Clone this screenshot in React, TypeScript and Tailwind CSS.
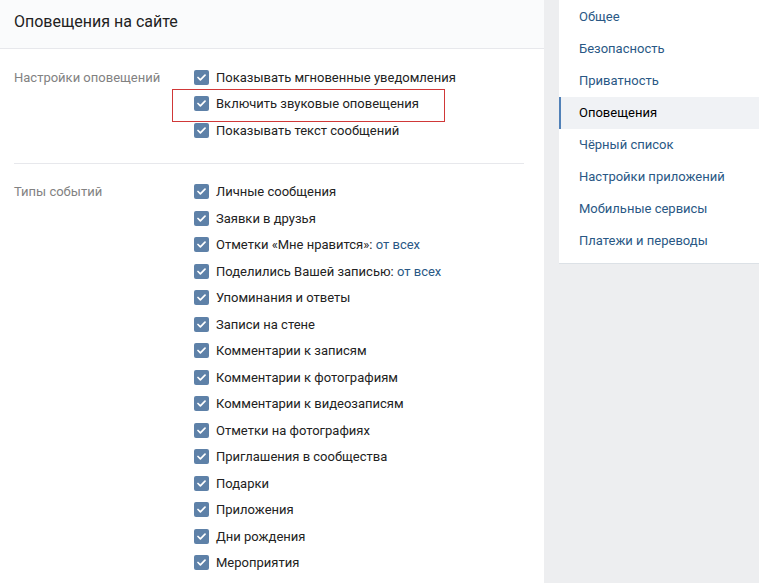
import React from 'react';

type Item = { label: string; link?: string; highlight?: boolean };

// первый блок настроек
const siteSettings: Item[] = [
  { label: 'Показывать мгновенные уведомления' },
  { label: 'Включить звуковые оповещения', highlight: true },
  { label: 'Показывать текст сообщений' },
];

// типы событий
const eventTypes: Item[] = [
  { label: 'Личные сообщения' },
  { label: 'Заявки в друзья' },
  { label: 'Отметки «Мне нравится»:', link: 'от всех' },
  { label: 'Поделились Вашей записью:', link: 'от всех' },
  { label: 'Упоминания и ответы' },
  { label: 'Записи на стене' },
  { label: 'Комментарии к записям' },
  { label: 'Комментарии к фотографиям' },
  { label: 'Комментарии к видеозаписям' },
  { label: 'Отметки на фотографиях' },
  { label: 'Приглашения в сообщества' },
  { label: 'Подарки' },
  { label: 'Приложения' },
  { label: 'Дни рождения' },
  { label: 'Мероприятия' },
];

const menu = [
  'Общее',
  'Безопасность',
  'Приватность',
  'Оповещения',
  'Чёрный список',
  'Настройки приложений',
  'Мобильные сервисы',
  'Платежи и переводы',
];

const Checkbox: React.FC = () => (
  <span className="flex h-[15px] w-[15px] shrink-0 items-center justify-center rounded-[2px] bg-[#5e81a8]">
    <svg width="9" height="7" viewBox="0 0 9 7" fill="none">
      <path d="M1 3.5L3.4 5.8L8 1.2" stroke="#fff" strokeWidth="1.7" strokeLinecap="round" strokeLinejoin="round" />
    </svg>
  </span>
);

const Row: React.FC<{ item: Item }> = ({ item }) => (
  <div className="relative flex h-[26.5px] items-center">
    {item.highlight && (
      <div className="absolute left-[-22px] top-[-1.5px] h-[33px] w-[273px] border border-[#d03838]" />
    )}
    <Checkbox />
    <span className="ml-[7px] whitespace-nowrap text-[#222]">
      {item.label}
      {item.link && <span className="text-[#2a5885]"> {item.link}</span>}
    </span>
  </div>
);

const Section: React.FC<{ title: string; items: Item[]; className?: string }> = ({ title, items, className }) => (
  <div className={'flex pl-[14px] pt-[15px] ' + (className ?? '')}>
    <div className="w-[180px] shrink-0 pt-[3.5px] text-[#828282]">{title}</div>
    <div className="flex flex-col">
      {items.map((it) => (
        <Row key={it.label} item={it} />
      ))}
    </div>
  </div>
);

export default function App() {
  return (
    <div
      className="flex h-[583px] w-[759px] overflow-hidden bg-[#edeef0] text-[13px]"
      style={{ fontFamily: 'Roboto, "Open Sans", Arial, sans-serif' }}
    >
      <div className="w-[544px] shrink-0 bg-white">
        <div className="flex h-[49px] items-center border-b border-[#e7e8ec] bg-[#fafbfc] pl-[14px] pb-[4px] text-[16px] text-[#222]">
          Оповещения на сайте
        </div>
        <Section title="Настройки оповещений" items={siteSettings} className="pb-[19px]" />
        <div className="ml-[14px] mr-[20px] border-t border-[#e7e8ec]" />
        <Section title="Типы событий" items={eventTypes} className="pb-[15px]" />
      </div>

      <div className="ml-[15px] flex-1">
        <div className="bg-white pt-[1px] pb-[6px] shadow-[0_1px_0_0_#dce1e6]">
          {menu.map((m) => {
            const active = m === 'Оповещения';
            return (
              <div
                key={m}
                className={
                  active
                    ? 'flex h-[32px] items-center border-l-2 border-[#5181b8] bg-[#f0f2f5] pl-[18px] text-[#000]'
                    : 'flex h-[32px] items-center border-l-2 border-transparent pl-[18px] text-[#2a5885]'
                }
              >
                {m}
              </div>
            );
          })}
        </div>
      </div>
    </div>
  );
}
